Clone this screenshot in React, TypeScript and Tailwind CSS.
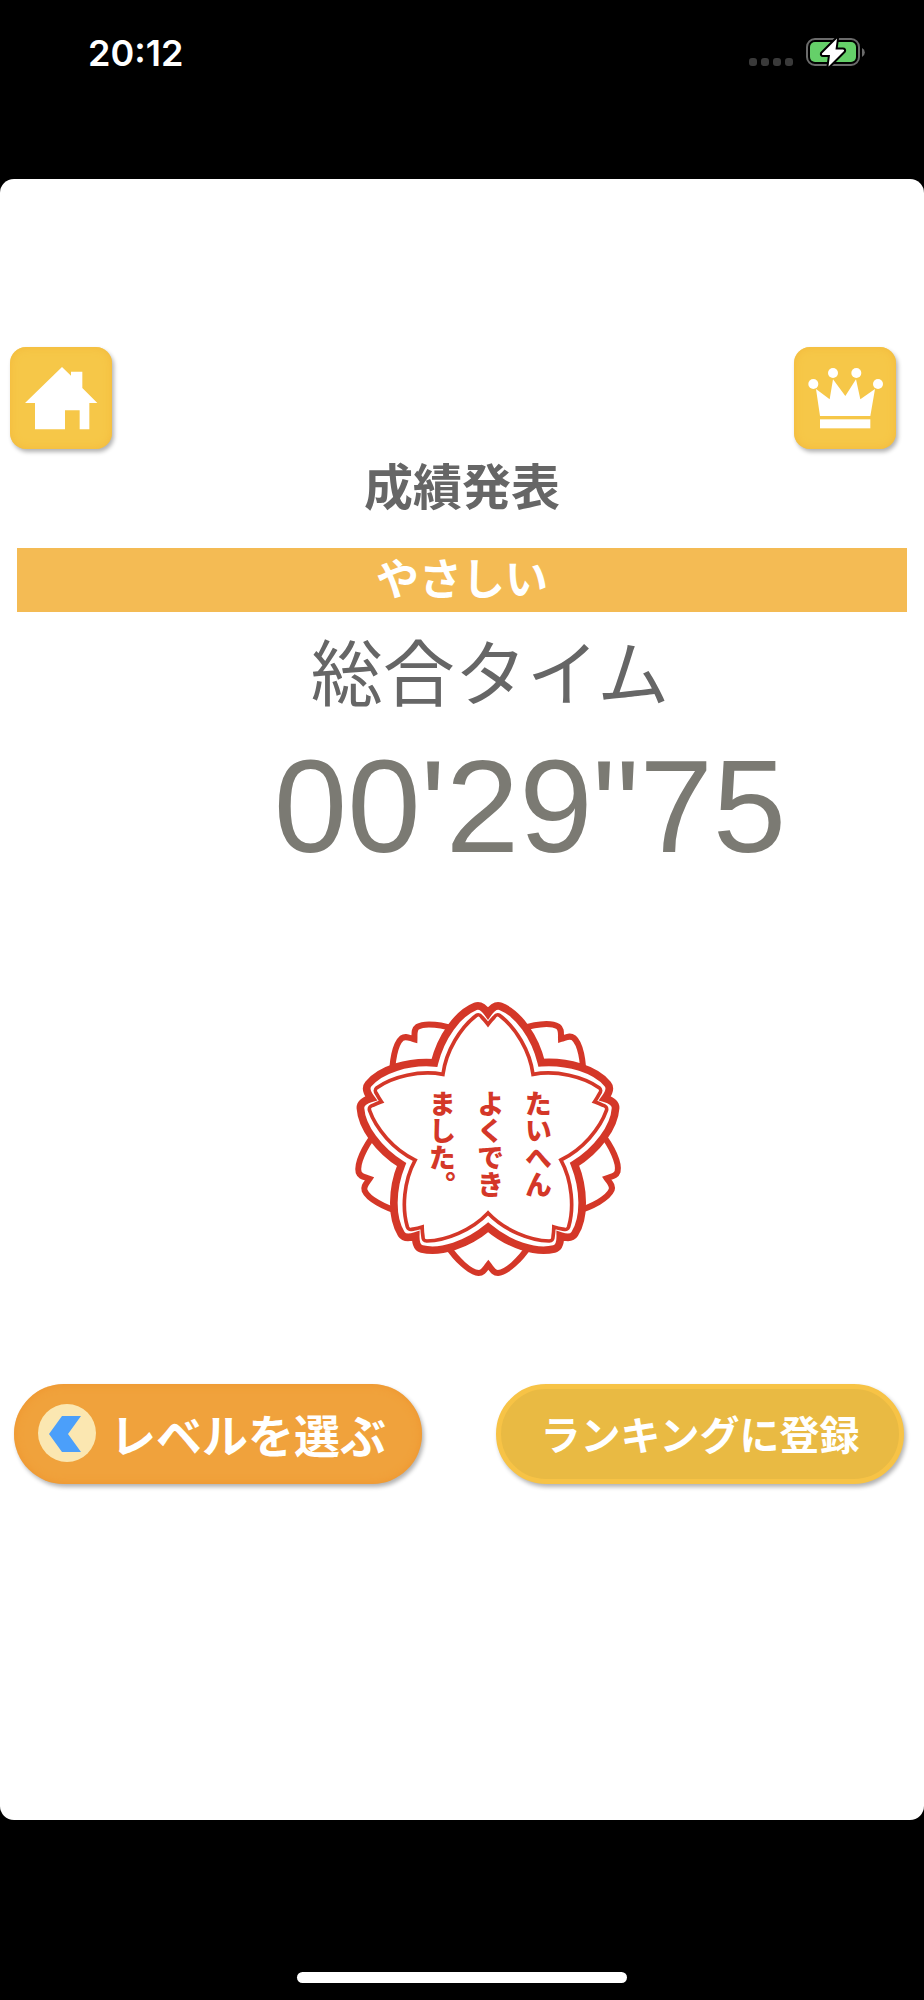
import React from "react";

const shadow = "shadow-[2px_3px_4px_rgba(0,0,0,0.3)]";
const jp = "font-['Noto_Sans_CJK_JP',sans-serif]";

function StatusBar() {
  return (
    <header className="flex h-[179px] items-start justify-between pl-[88px] pr-[59px] pt-[30px]">
      <time className="font-['Inter',sans-serif] text-[36px] font-semibold leading-[46px] text-white">20:12</time>
      <div className="flex items-end gap-[13px] pt-[7px]">
        <div className="flex gap-1 pb-[2px]">
          {[0, 1, 2, 3].map((i) => (
            <span key={i} className="size-2 rounded-[3px] bg-[#3a3a3a]" />
          ))}
        </div>
        <svg width="59" height="31" viewBox="0 0 59 31" aria-label="充電中">
          <rect x="1" y="2" width="52" height="26" rx="8" fill="none" stroke="#6b6b6b" strokeWidth="2" />
          <rect x="4" y="5" width="46" height="20" rx="5" fill="#65d069" />
          <path d="M56 11 a5 5 0 0 1 0 9z" fill="#6b6b6b" />
          <path
            d="M31 1.500 L16 16.500 Q15.500 18 17 18 H24 L22.500 29.500 L38 14 Q38.500 12.500 37 12.500 H29.500z"
            fill="#fff"
            stroke="#000"
            strokeWidth="4"
            strokeLinejoin="round"
            paintOrder="stroke"
          />
        </svg>
      </div>
    </header>
  );
}

function IconButton({ label, children }: { label: string; children: React.ReactNode }) {
  return (
    <button
      aria-label={label}
      className={`size-[102px] rounded-[16px] bg-[#f6c748] inset-shadow-[0_0_8px_#f3b93b] ${shadow}`}
    >
      <svg viewBox="0 0 306 306" className="size-full" fill="#fff">
        {children}
      </svg>
    </button>
  );
}

type Point = [number, number];

// One petal as a run of cubic control points, clockwise from its left base.
const OUTER: Point[] = [
  [303, 140], [353, 70], [406, 49],
  [416, 45], [428, 47], [444, 70],
  [460, 47], [472, 45], [482, 49],
  [535, 70], [585, 140], [604, 218],
];
const INNER: Point[] = [
  [318, 182], [362, 112], [408, 77],
  [416, 72], [420, 74], [426, 82],
  [432, 88], [438, 95], [444, 103],
  [450, 95], [456, 88], [462, 82],
  [468, 74], [472, 72], [480, 77],
  [526, 112], [570, 182], [579, 253],
];

function blossom(petal: Point[]) {
  const turn = ([x, y]: Point, degrees: number) => {
    const a = (degrees * Math.PI) / 180;
    const dx = x - 444;
    const dy = y - 439;
    const px = 444 + dx * Math.cos(a) - dy * Math.sin(a);
    const py = 439 + dx * Math.sin(a) + dy * Math.cos(a);
    return `${px.toFixed(1)} ${py.toFixed(1)}`;
  };
  const curves = [0, 72, 144, 216, 288].map((d) => `C${petal.map((p) => turn(p, d)).join(" ")}`);
  return `M${turn(petal[petal.length - 1], 288)}${curves.join("")}Z`;
}

function Stamp() {
  return (
    <div className="relative size-[300px]">
      <svg viewBox="0 0 900 900" className="size-full" fill="none" stroke="#d43728">
        {[0, 72, 144, 216, 288].map((a) => (
          <path
            key={a}
            transform={`rotate(${a} 444 450)`}
            strokeWidth="18"
            d="M320 765 C350 810 390 847 416 849 C430 849 434 838 445 824 C456 838 460 849 474 849 C500 847 540 810 570 765"
          />
        ))}
        <path d={blossom(OUTER)} fill="#fff" strokeWidth="23" />
        <path d={blossom(INNER)} strokeWidth="11" />
      </svg>
      <p
        className={`absolute left-[78px] top-[100px] text-[27px] font-black leading-[48px] text-[#d43728] [writing-mode:vertical-rl] ${jp}`}
      >
        たいへん
        <br />
        よくでき
        <br />
        ました。
      </p>
    </div>
  );
}

export default function App() {
  return (
    <div className={`flex min-h-screen flex-col bg-black ${jp}`}>
      <StatusBar />
      <main className="min-h-[1641px] rounded-[14px] bg-white pt-[168px]">
        <nav className="flex justify-between pl-[10px] pr-[28px]">
          <IconButton label="ホーム">
            <path d="M45 168 L156 60 L183 86 V74 H217 V123 L262 168 H238 V247 H209 V190 H165 V247 H75 V168z" />
          </IconButton>
          <IconButton label="ランキング">
            <path d="M66 126 L107 157 L117 97 L154 147 L186 97 L199 157 L243 126 L229 207 H78z" />
            <rect x="78" y="217" width="151" height="27" />
            <circle cx="58" cy="111" r="15" />
            <circle cx="117" cy="78" r="15" />
            <circle cx="187" cy="78" r="15" />
            <circle cx="252" cy="111" r="15" />
          </IconButton>
        </nav>
        <h1 className="pt-[7px] text-center text-[49px] font-bold leading-[56px] text-[#666]">成績発表</h1>
        <p className="mx-[17px] mt-[36px] h-[64px] bg-[#f4bb54] text-center text-[43px] font-bold leading-[56px] text-white">
          やさしい
        </p>
        <h2 className="mt-[19px] pl-[56px] text-center text-[72px] leading-[76px] text-[#666]">総合タイム</h2>
        <p className="mt-[33px] pl-[136px] text-center font-['Liberation_Sans',sans-serif] text-[132px] leading-[134px] text-[#7b7a73]">
          00'29"75
        </p>
        <div className="mt-[116px] flex justify-center pl-[56px]">
          <Stamp />
        </div>
        <div className="mt-[94px] grid grid-cols-2 gap-[74px] pl-[14px] pr-[20px]">
          <button
            className={`flex h-[100px] items-center gap-[14px] rounded-full bg-[#f0a23c] pb-[3px] pl-[24px] text-[46px] font-bold leading-[58px] text-white inset-shadow-[0_0_8px_#ef952f] ${shadow}`}
          >
            <svg viewBox="0 0 58 58" className="size-[58px] shrink-0">
              <circle cx="29" cy="29" r="29" fill="#fbe7b1" />
              <path d="M24 12 H43 L30 30 L43 48 H24 L11 30z" fill="#4b9ffa" />
            </svg>
            レベルを選ぶ
          </button>
          <button
            className={`h-[100px] rounded-full border-5 border-[#f7c346] bg-[#e9ba43] pb-[3px] text-[40px] font-bold text-white ${shadow}`}
          >
            ランキングに登録
          </button>
        </div>
      </main>
      <footer className="flex justify-center pt-[152px] pb-[17px]">
        <div className="h-[11px] w-[330px] rounded-full bg-white" />
      </footer>
    </div>
  );
}
